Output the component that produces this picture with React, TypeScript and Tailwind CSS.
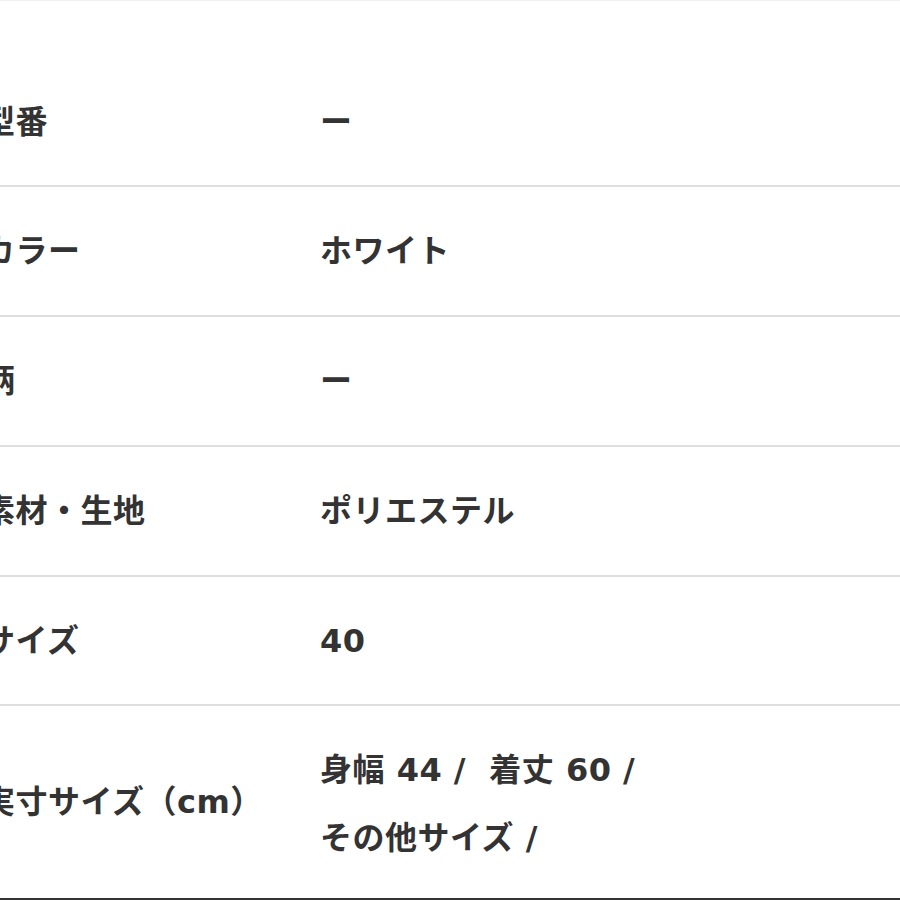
import React from "react";

const rows: { label: string; value: string[]; h: string }[] = [
  { label: "型番", value: ["ー"], h: "h-[128px]" },
  { label: "カラー", value: ["ホワイト"], h: "h-[130px]" },
  { label: "柄", value: ["ー"], h: "h-[130px]" },
  { label: "素材・生地", value: ["ポリエステル"], h: "h-[130px]" },
  { label: "サイズ", value: ["40"], h: "h-[129px]" },
  { label: "実寸サイズ（cm）", value: ["身幅 44 /  着丈 60 /", "その他サイズ /"], h: "h-[194px]" },
];

export default function App() {
  return (
    <div
      className="h-[900px] w-[900px] overflow-hidden bg-white text-[#333]"
      style={{ fontFamily: '"DejaVu Sans", "Noto Sans CJK JP", sans-serif' }}
    >
      <div className="border-t border-[#f0f0f0]" />
      <div className="h-[58px]" />
      {rows.map((row, i) => (
        <div
          key={i}
          className={`flex items-center ${row.h} ${
            i === rows.length - 1 ? "border-b-2 border-[#333]" : "border-b-2 border-[#dedede]"
          }`}
        >
          <div className="-ml-[17px] w-[337px] shrink-0 text-[32px] font-bold leading-[68px] tracking-[0.5px] whitespace-pre">
            {row.label}
          </div>
          <div className={`text-[32px] font-bold leading-[68px] tracking-[0.5px] ${row.value.length > 1 ? "pt-[4px]" : ""}`}>
            {row.value.map((v, j) => (
              <div key={j} className="whitespace-pre">
                {v}
              </div>
            ))}
          </div>
        </div>
      ))}
    </div>
  );
}
